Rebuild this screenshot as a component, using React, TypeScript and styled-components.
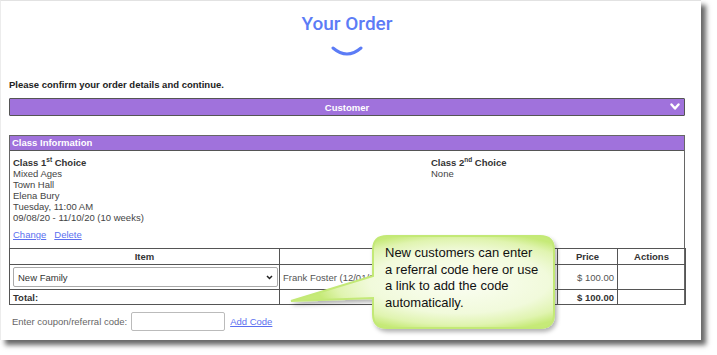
import React from "react";
import styled, { createGlobalStyle } from "styled-components";

const purple = "#a072dc";
const linkBlue = "#5b6ff0";

const GlobalStyle = createGlobalStyle`
  html, body {
    margin: 0;
    padding: 0;
    min-height: 355px;
    background: #ffffff;
  }
  body {
    font-family: "Liberation Sans", Arial, sans-serif;
    color: #444;
  }
`;

const Panel = styled.div`
  position: relative;
  box-sizing: border-box;
  width: 701px;
  height: 340px;
  padding: 0 16px 0 8px;
  background: #fff;
  border-top: 1px solid #e2e2e2;
  border-left: 1px solid #ececec;
  box-shadow: 5px 5px 5px rgba(0, 0, 0, 0.6);
`;

const TitleBlock = styled.div`
  display: flex;
  flex-direction: column;
  align-items: center;
  padding-top: 11px;
`;

const Title = styled.h1`
  margin: 0;
  font-family: Roboto, "Liberation Sans", sans-serif;
  font-weight: 500;
  font-size: 19px;
  line-height: 24px;
  color: #5c7cf6;
`;

const Smile = styled.svg`
  margin-top: 10px;
  display: block;
`;

const Intro = styled.p`
  margin: 23px 0 0;
  font-size: 9.5px;
  line-height: 12px;
  font-weight: bold;
  color: #222;
`;

const AccordionBar = styled.div`
  position: relative;
  box-sizing: border-box;
  height: 18px;
  margin-top: 7px;
  display: flex;
  align-items: center;
  justify-content: center;
  background: ${purple};
  border: 1px solid #555;
  border-radius: 1px;
  color: #fff;
  font-weight: bold;
  font-size: 9.5px;
`;

const BarChevron = styled.svg`
  position: absolute;
  right: 4px;
  top: 4px;
`;

const InfoBox = styled.section`
  margin-top: 19px;
  border: 1px solid #666;
`;

const InfoHeader = styled.div`
  height: 14px;
  line-height: 14px;
  padding-left: 2px;
  background: ${purple};
  border-bottom: 1px solid #555;
  color: #fff;
  font-weight: bold;
  font-size: 9.5px;
`;

const Choices = styled.div`
  display: grid;
  grid-template-columns: 418px 1fr;
  padding: 6px 3px 0;
  font-size: 9.5px;
  line-height: 11px;
`;

const Choice = styled.div`
  display: flex;
  flex-direction: column;
`;

const ChoiceTitle = styled.div`
  font-weight: bold;
  color: #333;
  sup {
    font-size: 6.5px;
    line-height: 0;
    vertical-align: 4px;
  }
`;

const Links = styled.div`
  display: flex;
  gap: 8px;
  margin-top: 6px;
`;

const Link = styled.a`
  color: ${linkBlue};
  text-decoration: underline;
  cursor: pointer;
`;

const Table = styled.table`
  width: calc(100% + 2px);
  margin: 8px -1px -1px;
  border-collapse: collapse;
  table-layout: fixed;
  font-size: 9.5px;
`;

const Th = styled.th`
  height: 15px;
  padding: 0;
  border: 1px solid #555;
  font-weight: bold;
  color: #333;
  text-align: center;
`;

const Td = styled.td<{ $align?: string; $bold?: boolean }>`
  padding: 0 3px;
  border: 1px solid #555;
  text-align: ${(p) => p.$align || "left"};
  font-weight: ${(p) => (p.$bold ? "bold" : "normal")};
  color: ${(p) => (p.$bold ? "#333" : "#555")};
  white-space: nowrap;
  overflow: hidden;
`;

const ItemRow = styled.tr`
  height: 25px;
`;

const TotalRow = styled.tr`
  height: 15px;
`;

const SelectWrap = styled.div`
  position: relative;
  width: 265px;
`;

const Select = styled.select`
  box-sizing: border-box;
  width: 100%;
  height: 20px;
  padding: 0 0 0 4px;
  appearance: none;
  background: #fff;
  border: 1px solid #aaa;
  border-radius: 2px;
  font-family: "Liberation Sans", Arial, sans-serif;
  font-size: 9.5px;
  color: #333;
`;

const SelectChevron = styled.svg`
  position: absolute;
  right: 5px;
  top: 8px;
  pointer-events: none;
`;

const CouponRow = styled.div`
  display: flex;
  align-items: center;
  margin-top: 7px;
  padding-left: 3px;
  font-size: 9.5px;
  color: #666;
`;

const CouponInput = styled.input`
  box-sizing: border-box;
  width: 94px;
  height: 19px;
  margin: 0 5px 0 4px;
  border: 1px solid #bbb;
  border-radius: 2px;
`;

const Callout = styled.div`
  position: absolute;
  left: 288px;
  top: 233px;
  width: 272px;
  height: 104px;
`;

const CalloutText = styled.p`
  position: absolute;
  left: 96px;
  top: 11px;
  margin: 0;
  font-family: "Liberation Sans", Arial, sans-serif;
  font-size: 13px;
  line-height: 16.5px;
  color: #111;
`;

export default function App() {
  return (
    <>
      <GlobalStyle />
      <Panel>
        <TitleBlock>
          <Title>Your Order</Title>
          <Smile width="32" height="10" viewBox="0 0 32 10">
            <path d="M2 2 Q16 14 30 2" fill="none" stroke="#5c7cf6" strokeWidth="3" strokeLinecap="round" />
          </Smile>
        </TitleBlock>
        <Intro>Please confirm your order details and continue.</Intro>
        <AccordionBar>
          Customer
          <BarChevron width="10" height="8" viewBox="0 0 10 8">
            <path d="M1.5 1.5 L5 5.5 L8.5 1.5" fill="none" stroke="#fff" strokeWidth="2.4" strokeLinecap="round" strokeLinejoin="round" />
          </BarChevron>
        </AccordionBar>
        <InfoBox>
          <InfoHeader>Class Information</InfoHeader>
          <Choices>
            <Choice>
              <ChoiceTitle>
                Class 1<sup>st</sup> Choice
              </ChoiceTitle>
              <span>Mixed Ages</span>
              <span>Town Hall</span>
              <span>Elena Bury</span>
              <span>Tuesday, 11:00 AM</span>
              <span>09/08/20 - 11/10/20 (10 weeks)</span>
              <Links>
                <Link>Change</Link>
                <Link>Delete</Link>
              </Links>
            </Choice>
            <Choice>
              <ChoiceTitle>
                Class 2<sup>nd</sup> Choice
              </ChoiceTitle>
              <span>None</span>
            </Choice>
          </Choices>
          <Table>
            <colgroup>
              <col style={{ width: 270 }} />
              <col style={{ width: 278 }} />
              <col style={{ width: 60 }} />
              <col style={{ width: 68 }} />
            </colgroup>
            <thead>
              <tr>
                <Th>Item</Th>
                <Th />
                <Th>Price</Th>
                <Th>Actions</Th>
              </tr>
            </thead>
            <tbody>
              <ItemRow>
                <Td>
                  <SelectWrap>
                    <Select defaultValue="new">
                      <option value="new">New Family</option>
                    </Select>
                    <SelectChevron width="7" height="5" viewBox="0 0 7 5">
                      <path d="M1 1 L3.5 3.5 L6 1" fill="none" stroke="#222" strokeWidth="1.5" />
                    </SelectChevron>
                  </SelectWrap>
                </Td>
                <Td>Frank Foster (12/01/2015)</Td>
                <Td $align="right">$ 100.00</Td>
                <Td />
              </ItemRow>
              <TotalRow>
                <Td $bold>Total:</Td>
                <Td />
                <Td $align="right" $bold>
                  $ 100.00
                </Td>
                <Td />
              </TotalRow>
            </tbody>
          </Table>
        </InfoBox>
        <CouponRow>
          <span>Enter coupon/referral code:</span>
          <CouponInput type="text" />
          <Link>Add Code</Link>
        </CouponRow>
        <Callout>
          <svg width="272" height="104" viewBox="0 0 272 104">
            <defs>
              <radialGradient id="calloutFill" cx="0.64" cy="0.5" r="0.55">
                <stop offset="0" stopColor="#fbfef4" />
                <stop offset="0.62" stopColor="#f1fadb" />
                <stop offset="0.85" stopColor="#e0f4b0" />
                <stop offset="1" stopColor="#c6ea78" />
              </radialGradient>
              <filter id="calloutShadow" x="-10%" y="-10%" width="125%" height="130%">
                <feDropShadow dx="2" dy="3" stdDeviation="2" floodColor="#000" floodOpacity="0.3" />
              </filter>
            </defs>
            <path
              d="M98 2 H251 Q265 2 265 16 V80 Q265 94 251 94 H98 Q84 94 84 80 V64 L2 67 L84 42 V16 Q84 2 98 2 Z"
              fill="url(#calloutFill)"
              stroke="#c3e976"
              strokeWidth="2"
              filter="url(#calloutShadow)"
            />
          </svg>
          <CalloutText>
            New customers can enter
            <br />
            a referral code here or use
            <br />
            a link to add the code
            <br />
            automatically.
          </CalloutText>
        </Callout>
      </Panel>
    </>
  );
}
